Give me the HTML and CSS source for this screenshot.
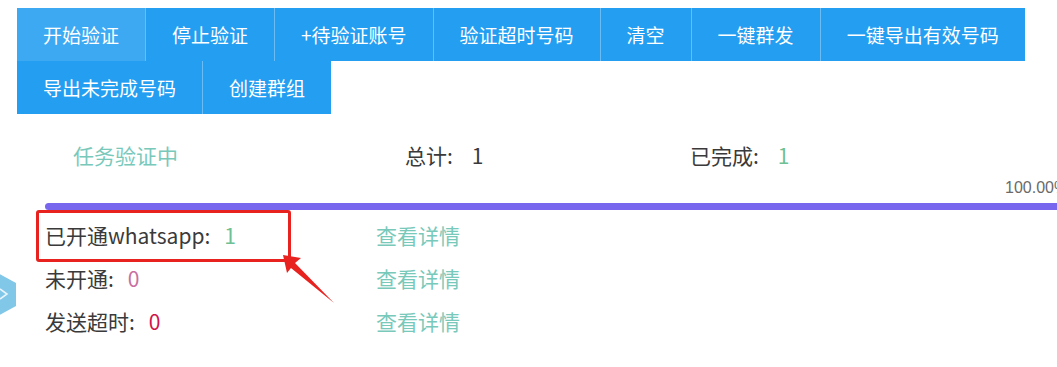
FILE: index.html
```html
<!DOCTYPE html>
<html lang="zh">
<head>
<meta charset="utf-8">
<link rel="stylesheet" href="styles.css">
</head>
<body>
<div class="page">
  <div class="toolbar">
    <button class="btn btn-active">开始验证</button>
    <button class="btn">停止验证</button>
    <button class="btn">+待验证账号</button>
    <button class="btn">验证超时号码</button>
    <button class="btn">清空</button>
    <button class="btn">一键群发</button>
    <button class="btn btn-last">一键导出有效号码</button>
    <button class="btn">导出未完成号码</button>
    <button class="btn btn-last">创建群组</button>
  </div>

  <div class="stats">
    <div class="stat stat-status">任务验证中</div>
    <div class="stat stat-total">总计:<span class="num num-dark">1</span></div>
    <div class="stat">已完成:<span class="num num-green">1</span></div>
  </div>

  <div class="progress">
    <div class="progress-text">100.00%</div>
    <div class="progress-bar"></div>
  </div>

  <div class="results">
    <div class="result-row">
      <div class="result-label">已开通whatsapp:<span class="num num-green">1</span></div>
      <a class="detail">查看详情</a>
    </div>
    <div class="result-row">
      <div class="result-label">未开通:<span class="num num-pink">0</span></div>
      <a class="detail">查看详情</a>
    </div>
    <div class="result-row">
      <div class="result-label">发送超时:<span class="num num-red">0</span></div>
      <a class="detail">查看详情</a>
    </div>
  </div>
</div>

<div class="annot-box"></div>
<svg class="annot-arrow" width="80" height="70" viewBox="0 0 80 70">
  <polygon points="13,10 31,13 25,18 64,58 21,23 17,28" fill="#e8231f"/>
</svg>

<svg class="side-hex" width="20" height="80" viewBox="0 0 20 80">
  <polygon points="-22,6 16,27 16,50 -22,71" fill="#80c7e8"/>
  <polyline points="0,33 7,38 0,43" fill="none" stroke="#e6f4fb" stroke-width="1.6"/>
</svg>
</body>
</html>
```

FILE: styles.css
```css
html, body {
  margin: 0;
  padding: 0;
  background: #ffffff;
  overflow: hidden;
}

body {
  width: 1057px;
  height: 367px;
  position: relative;
  font-family: "Noto Sans CJK SC", "Noto Sans", sans-serif;
  color: #3a3a3a;
}

.page {
  padding-top: 8px;
}

.toolbar {
  display: flex;
  flex-wrap: wrap;
  margin-left: 17px;
  width: 1012px;
}

.btn {
  height: 53px;
  padding: 0 26px;
  border: none;
  border-right: 1px solid #6bbcf4;
  background: #239ef1;
  color: #ffffff;
  font-family: "Noto Sans CJK SC", "Noto Sans", sans-serif;
  font-size: 19px;
  line-height: 53px;
  white-space: nowrap;
}

.btn-active {
  background: #3ea9f3;
}

.btn-last {
  border-right: none;
}

.stats {
  display: flex;
  align-items: center;
  height: 30px;
  margin-top: 26px;
  padding-left: 73px;
  font-size: 21px;
}

.stat-status {
  width: 332px;
  color: #79c9bb;
}

.stat-total {
  width: 285px;
}

.num {
  margin-left: 19px;
}

.num-dark { color: #3a3a3a; }
.num-green { color: #6dc194; }
.num-pink { color: #c7709f; }
.num-red { color: #d0144a; }

.progress {
  margin-top: 8px;
  padding-left: 45px;
}

.progress-text {
  margin-left: 960px;
  height: 20px;
  font-family: "Liberation Sans", "Noto Sans", sans-serif;
  font-size: 16px;
  line-height: 20px;
  color: #6a6a6a;
  white-space: nowrap;
}

.progress-bar {
  margin-top: 5px;
  height: 7px;
  width: 1040px;
  border-radius: 4px 0 0 4px;
  background: #7966ee;
}

.results {
  margin-top: 3px;
  padding-left: 45px;
  font-size: 21px;
}

.result-row {
  display: flex;
  align-items: center;
  height: 43px;
}

.result-label {
  width: 331px;
}

.result-label .num {
  margin-left: 14px;
}

.detail {
  color: #79c9bb;
  text-decoration: none;
}

.annot-box {
  position: absolute;
  left: 36px;
  top: 210px;
  width: 249px;
  height: 46px;
  border: 3px solid #e8231f;
  border-radius: 3px;
}

.annot-arrow {
  position: absolute;
  left: 270px;
  top: 245px;
}

.side-hex {
  position: absolute;
  left: 0;
  top: 256px;
}
```
